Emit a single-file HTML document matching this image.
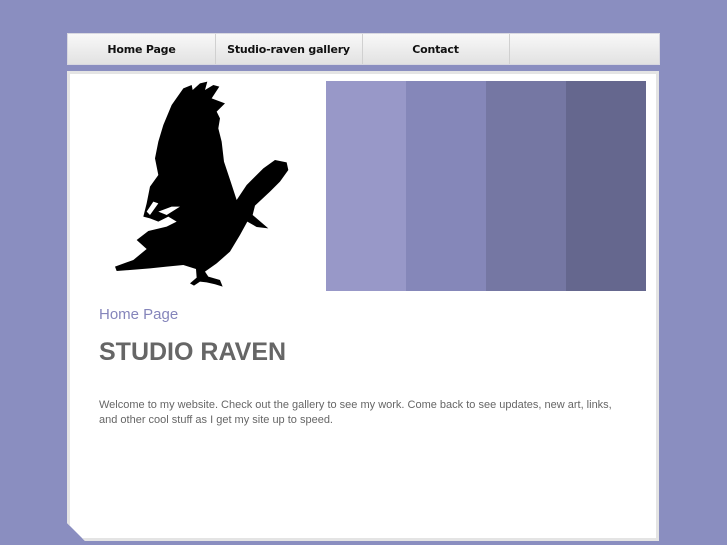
<!DOCTYPE html>
<html><head><style>
body{margin:0;width:727px;height:545px;background:#8a8ec0;position:relative;overflow:hidden;font-family:"DejaVu Sans","Liberation Sans",sans-serif}
.nav{position:absolute;left:67px;top:33px;width:593px;height:32px;background:linear-gradient(#f8f8f8,#e2e2e2);border:1px solid #d8d8e0;box-sizing:border-box}
.nav div{position:absolute;top:0;height:30px;line-height:31px;text-align:center;font-size:11px;font-weight:bold;color:#111;border-right:1px solid #d0d0d0;letter-spacing:-0.2px}
.panel{position:absolute;left:67px;top:71px;width:592px;height:470px;background:#fff;border:3px solid #e4e4e4;box-sizing:border-box;clip-path:polygon(0 0,100% 0,100% 100%,18px 100%,0 452px)}
.s{position:absolute;top:81px;height:210px;width:80px}
</style></head><body>
<div class="nav">
<div style="left:0;width:147px">Home Page</div>
<div style="left:147px;width:147px">Studio-raven gallery</div>
<div style="left:294px;width:147px">Contact</div>
</div>
<div class="panel"></div>
<svg style="position:absolute;left:0;top:0" width="727" height="545"><g transform="translate(100,75) scale(0.3333)"><path fill="#000" d="M215,90 L250,40 L275,30 L278,45 L300,25 L322,20 L315,45 L340,30 L358,35 L335,70 L375,85 L350,110 L360,130 L355,160 L365,200 L372,260 L392,320 L410,375 L440,330 L490,280 L525,255 L560,262 L565,285 L540,320 L510,350 L465,392 L458,420 L505,460 L470,456 L442,440 L420,480 L390,530 L350,565 L315,590 L325,605 L360,615 L368,635 L345,628 L320,622 L300,620 L282,632 L270,625 L290,608 L288,582 L250,570 L200,575 L150,580 L90,585 L50,588 L45,575 L100,555 L140,522 L110,495 L145,468 L200,455 L230,440 L205,425 L175,440 L150,430 L130,425 L140,385 L150,335 L175,300 L165,250 L175,200 L190,150 Z"/><path fill="#fff" d="M200,420 L240,395 L215,395 L175,410 Z M150,420 L175,385 L160,380 L140,410 Z"/></g></svg>
<div class="s" style="left:326px;background:#9898c8"></div>
<div class="s" style="left:406px;background:#8587b9"></div>
<div class="s" style="left:486px;background:#7577a3"></div>
<div class="s" style="left:566px;background:#65678e"></div>
<div style="position:absolute;left:99px;top:306px;font-size:15px;color:#8585bb;font-family:'Liberation Sans',sans-serif">Home Page</div>
<div style="position:absolute;left:99px;top:338px;font-size:25px;font-weight:bold;color:#666;font-family:'Liberation Sans',sans-serif">STUDIO RAVEN</div>
<div style="position:absolute;left:99px;top:398px;width:520px;font-size:11px;line-height:15px;color:#666;font-family:'Liberation Sans',sans-serif">Welcome to my website. Check out the gallery to see my work. Come back to see updates, new art, links, and other cool stuff as I get my site up to speed.</div>
</body></html>
